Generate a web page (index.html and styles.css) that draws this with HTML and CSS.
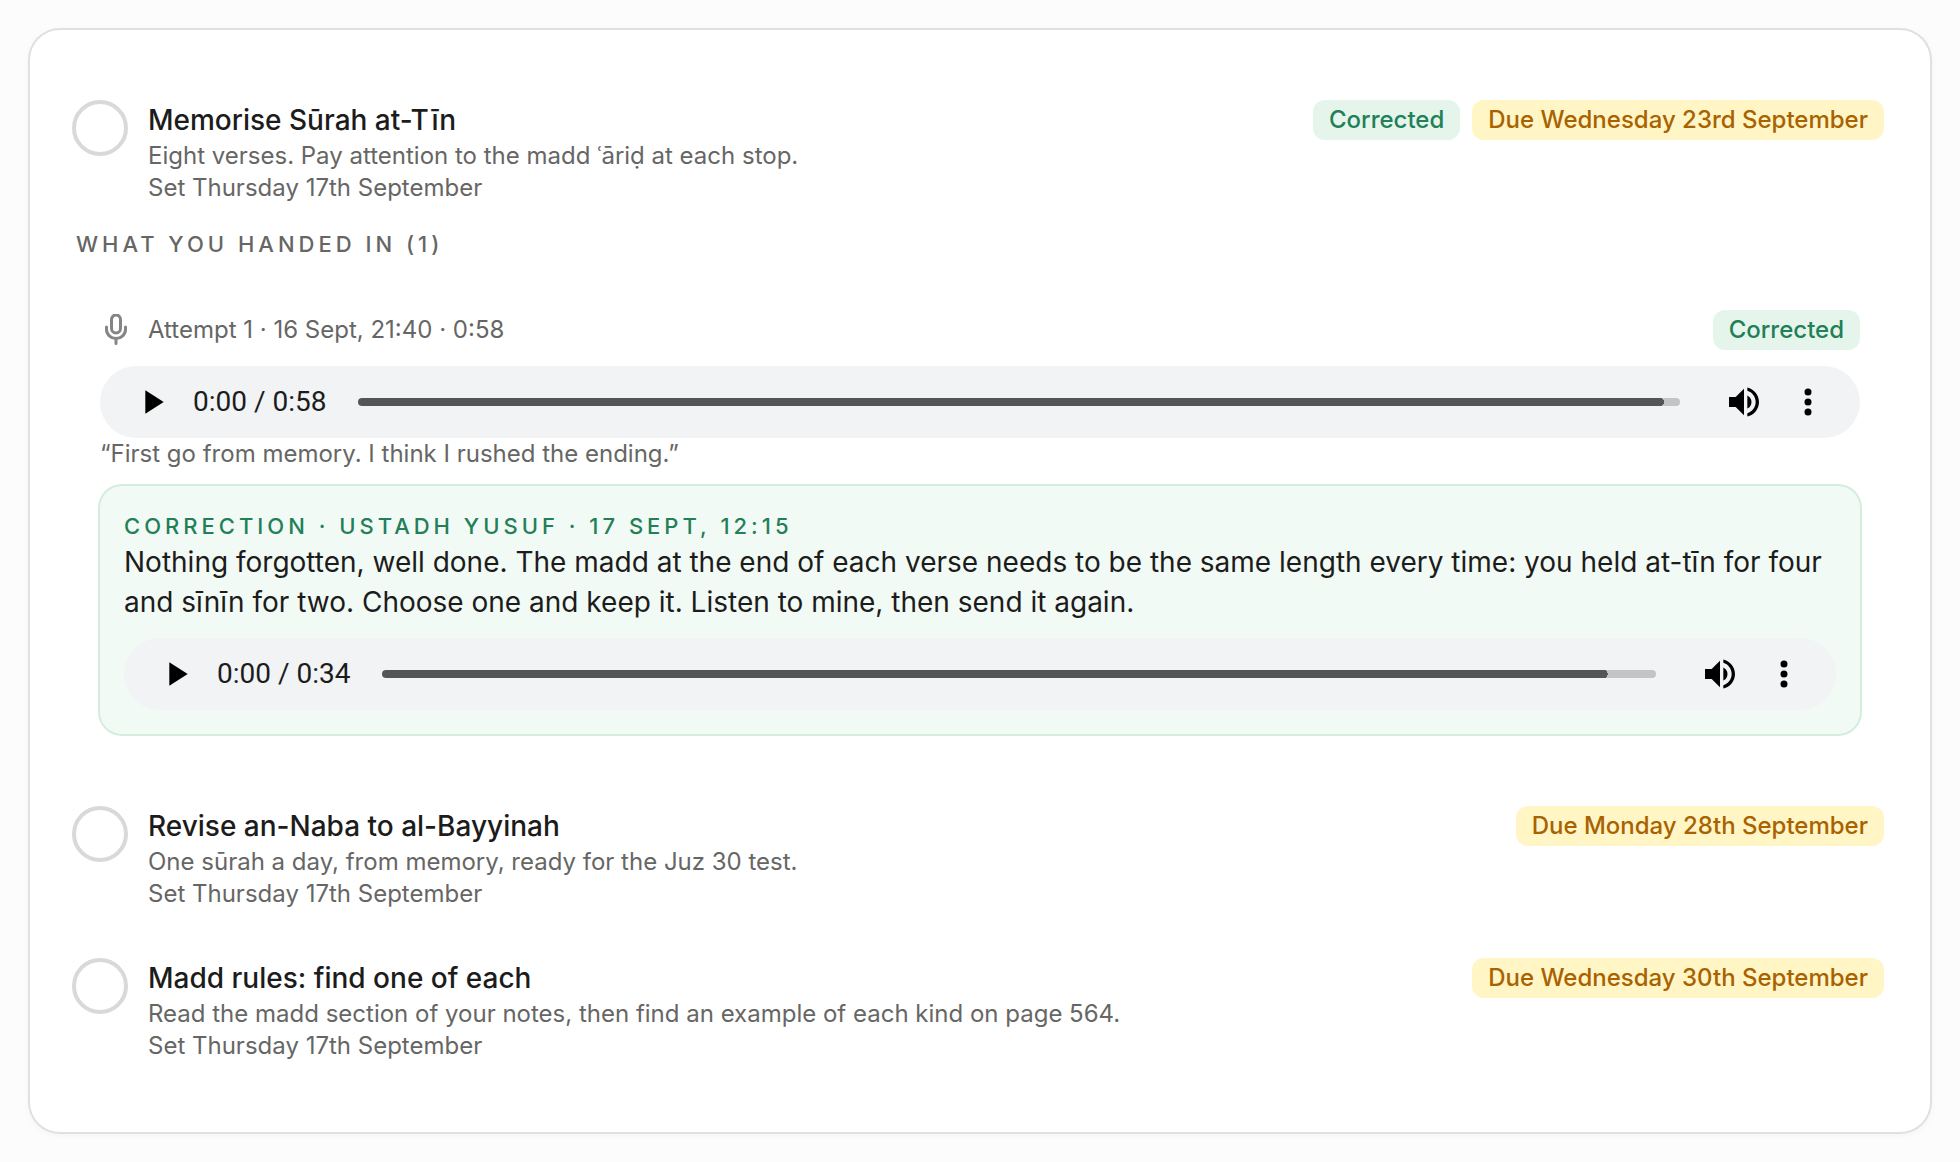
FILE: index.html
```html
<!DOCTYPE html>
<html lang="en-GB">
<head>
  <meta charset="utf-8">
  <meta name="viewport" content="width=device-width,initial-scale=1">
  <title>Homework</title>
  <link rel="stylesheet" href="styles.css">
</head>
<body>
  <svg class="sprite" aria-hidden="true">
    <symbol id="play" viewBox="0 0 24 24"><path d="M8 5v14l11-7z"/></symbol>
    <symbol id="volume" viewBox="0 0 24 24"><path d="M3 9v6h4l5 5V4L7 9H3zm11-.97v7.94A4.5 4.5 0 0 0 16.5 12 4.5 4.5 0 0 0 14 8.03zM14 3.23v2.06c2.89.86 5 3.54 5 6.71s-2.11 5.85-5 6.71v2.06c4.01-.91 7-4.49 7-8.77s-2.99-7.86-7-8.77z"/></symbol>
    <symbol id="more" viewBox="0 0 24 24"><circle cx="12" cy="6" r="2.1"/><circle cx="12" cy="12" r="2.1"/><circle cx="12" cy="18" r="2.1"/></symbol>
  </svg>

  <main class="card">
    <ul class="tasks">
      <li class="task">
        <div class="task-row">
          <input class="check" type="checkbox" id="task-1">
          <div class="task-text">
            <label class="title" for="task-1">Memorise Sūrah at-Tīn</label>
            <p class="small">Eight verses. Pay attention to the madd ʿāriḍ at each stop.</p>
            <p class="small">Set Thursday 17th September</p>
          </div>
          <div class="badges">
            <span class="badge green">Corrected</span>
            <span class="badge yellow">Due Wednesday 23rd September</span>
          </div>
        </div>

        <h2 class="eyebrow">What you handed in (1)</h2>

        <div class="attempt">
          <div class="attempt-head">
            <svg class="mic" viewBox="0 0 32 32" aria-hidden="true">
              <rect x="11.5" y="1" width="9" height="18" rx="4.5"/>
              <path d="M6.5 13v2.5a9.5 9 0 0 0 19 0V13M16 24.5v5"/>
            </svg>
            <p class="small">Attempt 1 · 16 Sept, 21:40 · 0:58</p>
            <span class="badge green">Corrected</span>
          </div>
          <div class="player">
            <button type="button" aria-label="Play"><svg><use href="#play"/></svg></button>
            <span class="time">0:00 / 0:58</span>
            <input class="seek" type="range" min="0" max="58" value="0" aria-label="Seek" style="--loaded: 98.8%">
            <button type="button" aria-label="Mute"><svg><use href="#volume"/></svg></button>
            <button type="button" aria-label="More options"><svg><use href="#more"/></svg></button>
          </div>
          <p class="small">“First go from memory. I think I rushed the ending.”</p>

          <div class="correction">
            <h3 class="eyebrow">Correction · Ustadh Yusuf · 17 Sept, 12:15</h3>
            <p class="feedback">Nothing forgotten, well done. The madd at the end of each verse needs to be the same length every time: you held at-tīn for four and sīnīn for two. Choose one and keep it. Listen to mine, then send it again.</p>
            <div class="player">
              <button type="button" aria-label="Play"><svg><use href="#play"/></svg></button>
              <span class="time">0:00 / 0:34</span>
              <input class="seek" type="range" min="0" max="34" value="0" aria-label="Seek" style="--loaded: 96.2%">
              <button type="button" aria-label="Mute"><svg><use href="#volume"/></svg></button>
              <button type="button" aria-label="More options"><svg><use href="#more"/></svg></button>
            </div>
          </div>
        </div>
      </li>

      <li class="task">
        <div class="task-row">
          <input class="check" type="checkbox" id="task-2">
          <div class="task-text">
            <label class="title" for="task-2">Revise an-Naba to al-Bayyinah</label>
            <p class="small">One sūrah a day, from memory, ready for the Juz 30 test.</p>
            <p class="small">Set Thursday 17th September</p>
          </div>
          <div class="badges">
            <span class="badge yellow">Due Monday 28th September</span>
          </div>
        </div>
      </li>

      <li class="task">
        <div class="task-row">
          <input class="check" type="checkbox" id="task-3">
          <div class="task-text">
            <label class="title" for="task-3">Madd rules: find one of each</label>
            <p class="small">Read the madd section of your notes, then find an example of each kind on page 564.</p>
            <p class="small">Set Thursday 17th September</p>
          </div>
          <div class="badges">
            <span class="badge yellow">Due Wednesday 30th September</span>
          </div>
        </div>
      </li>
    </ul>
  </main>
</body>
</html>
```
FILE: styles.css
```css
* {
  box-sizing: border-box;
}

body {
  background: #fcfcfc;
  color: #1c1c1c;
  font-family: Inter, "Noto Sans", sans-serif;
  font-size: 28px;
  line-height: 40px;
  margin: 0;
  padding: 30px;
}

h2, h3, p, ul {
  margin: 0;
  padding: 0;
}

.sprite {
  display: none;
}

.card {
  background: #fff;
  border-radius: 30px;
  box-shadow: 0 0 0 2px #e0e0df, 0 2px 8px rgba(0, 0, 0, .05);
  padding: 46px;
}

.tasks {
  list-style: none;
}

.task {
  padding: 24px 0;
}

.task-row {
  align-items: flex-start;
  display: flex;
  gap: 20px;
}

.check {
  appearance: none;
  background: #fff;
  border: 4px solid #d9d9d8;
  border-radius: 50%;
  cursor: pointer;
  flex: none;
  height: 56px;
  margin: 0 0 0 -4px;
  width: 56px;
}

.check:checked {
  background: #227f58;
  border-color: #227f58;
}

.task-text {
  flex: 1;
}

.title {
  display: block;
  font-weight: 500;
}

.small {
  color: #666665;
  font-size: 24px;
  line-height: 32px;
}

.badges {
  display: flex;
  gap: 12px;
}

.badge {
  border-radius: 12px;
  font-size: 24px;
  font-weight: 500;
  line-height: 40px;
  padding: 0 16px;
  white-space: nowrap;
}

.green {
  background: #e5f5eb;
  color: #227f58;
}

.yellow {
  background: #fff5c5;
  color: #a86200;
}

.eyebrow {
  color: #666665;
  font-size: 22px;
  font-weight: 500;
  letter-spacing: 4px;
  line-height: 32px;
  margin-top: 24px;
  text-transform: uppercase;
}

.attempt {
  padding: 50px 24px 24px;
}

.attempt-head {
  align-items: center;
  display: flex;
  gap: 16px;
  margin-bottom: 16px;
}

.attempt-head .badge {
  margin-left: auto;
}

.mic {
  fill: none;
  height: 32px;
  stroke: #858584;
  stroke-linecap: round;
  stroke-width: 3;
  width: 32px;
}

.player {
  align-items: center;
  background: #f1f3f4;
  border-radius: 36px;
  display: flex;
  height: 72px;
  padding: 0 32px;
}

.player button {
  background: none;
  border: 0;
  cursor: pointer;
  height: 40px;
  padding: 0;
  width: 40px;
}

.player button:last-child {
  margin-left: 24px;
}

.player svg {
  display: block;
  height: 40px;
  width: 40px;
}

.time {
  font-family: Roboto, sans-serif;
  margin-left: 21px;
}

/* loaded part: a straight bar with a round cap at its end */
.seek {
  --end: calc(var(--loaded) - 4px);
  appearance: none;
  background:
    radial-gradient(circle at var(--end) 50%, #555 4px, transparent 4px),
    linear-gradient(to right, #555 var(--end), #c3c4c5 var(--end));
  border-radius: 4px;
  flex: 1;
  height: 8px;
  margin: 0 44px 0 32px;
  min-width: 0;
}

/* the thumb only shows once the player is hovered */
.seek::-webkit-slider-thumb {
  appearance: none;
  background: #000;
  border-radius: 50%;
  height: 24px;
  opacity: 0;
  width: 24px;
}

.player:hover .seek::-webkit-slider-thumb {
  opacity: 1;
}

.correction {
  background: #f2faf5;
  border-radius: 22px;
  box-shadow: 0 0 0 2px #d4eede;
  margin-top: 16px;
  padding: 24px;
}

.correction .eyebrow {
  color: #227f58;
  margin-top: 0;
}

.feedback {
  margin-bottom: 16px;
}
```
